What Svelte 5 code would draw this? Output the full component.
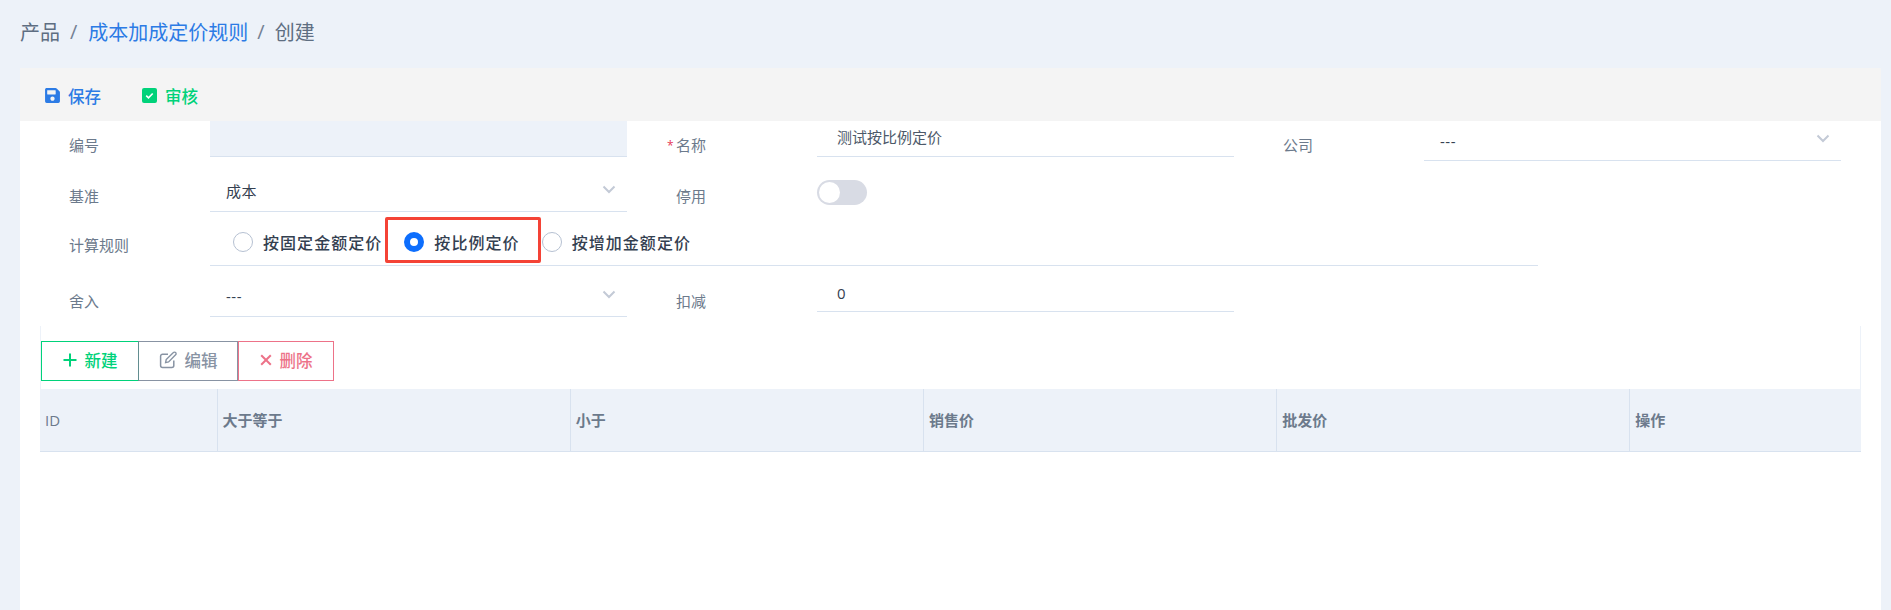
<script lang="ts">
  const columns = ["ID", "大于等于", "小于", "销售价", "批发价", "操作"];
  const rules = ["按固定金额定价", "按比例定价", "按增加金额定价"];

  let rule = $state(rules[1]);
  let disabled = $state(false);
</script>

{#snippet chevron()}
  <svg class="chevron" viewBox="0 0 14 9" width="14" height="9" aria-hidden="true">
    <path d="M1.5 1.5 7 7l5.5-5.5" fill="none" stroke="#c3cad6" stroke-width="2" />
  </svg>
{/snippet}

<div class="page">
  <nav class="crumbs">
    <span>产品</span>
    <span class="sep">/</span>
    <a href="#rules">成本加成定价规则</a>
    <span class="sep">/</span>
    <span>创建</span>
  </nav>

  <main class="card">
    <div class="toolbar">
      <button class="tool save" type="button">
        <svg viewBox="0 0 448 512" width="15" height="17" aria-hidden="true">
          <path fill="currentColor" d="M433.941 129.941l-83.882-83.882A48 48 0 0 0 316.118 32H48C21.49 32 0 53.49 0 80v352c0 26.51 21.49 48 48 48h352c26.51 0 48-21.49 48-48V163.882a48 48 0 0 0-14.059-33.941zM224 416c-35.346 0-64-28.654-64-64 0-35.346 28.654-64 64-64s64 28.654 64 64c0 35.346-28.654 64-64 64zm96-304.52V212c0 6.627-5.373 12-12 12H76c-6.627 0-12-5.373-12-12V108c0-6.627 5.373-12 12-12h228.52c3.183 0 6.235 1.264 8.485 3.515l3.48 3.48A11.996 11.996 0 0 1 320 111.48z" />
        </svg>
        保存
      </button>
      <button class="tool approve" type="button">
        <svg viewBox="0 0 15 15" width="15" height="15" aria-hidden="true">
          <rect width="15" height="15" rx="2" fill="currentColor" />
          <path d="M4.2 7.6 6.5 9.8l4.2-4.3" fill="none" stroke="#fff" stroke-width="1.6" />
        </svg>
        审核
      </button>
    </div>

    <form class="form">
      <label class="label" for="code">编号</label>
      <input id="code" class="field readonly" readonly />

      <label class="label" for="name"><span class="star">*</span>名称</label>
      <input id="name" class="field text name" value="测试按比例定价" />

      <span class="label">公司</span>
      <div class="field select company"><span>---</span>{@render chevron()}</div>

      <span class="label">基准</span>
      <div class="field select"><span>成本</span>{@render chevron()}</div>

      <span class="label">停用</span>
      <button
        class="switch"
        class:on={disabled}
        type="button"
        aria-label="停用"
        onclick={() => (disabled = !disabled)}
      ></button>
      <span></span>
      <span></span>

      <span class="label">计算规则</span>
      <div class="radios">
        {#each rules as item}
          <label class="radio">
            <input type="radio" name="rule" value={item} bind:group={rule} />
            <span>{item}</span>
          </label>
        {/each}
        <div class="highlight"></div>
      </div>

      <span class="label">舍入</span>
      <div class="field select"><span>---</span>{@render chevron()}</div>

      <span class="label">扣减</span>
      <input class="field text deduct" value="0" />
    </form>

    <section class="lines">
      <div class="actions">
        <button class="action add" type="button">
          <svg viewBox="0 0 14 14" width="14" height="14" aria-hidden="true">
            <path d="M7 .5v13M.5 7h13" stroke="currentColor" stroke-width="2" fill="none" />
          </svg>
          新建
        </button>
        <button class="action edit" type="button">
          <svg viewBox="0 0 18 18" width="18" height="18" aria-hidden="true">
            <path d="M9 3.2H3.6a2 2 0 0 0-2 2v9.2a2 2 0 0 0 2 2h9.2a2 2 0 0 0 2-2V9.5" fill="none" stroke="currentColor" stroke-width="1.5" />
            <path d="M6.6 11.6l.6-3 7.2-7a1.5 1.5 0 0 1 2.2 0 1.5 1.5 0 0 1 0 2.2l-7 7.1z" fill="none" stroke="currentColor" stroke-width="1.4" />
          </svg>
          编辑
        </button>
        <button class="action remove" type="button">
          <svg viewBox="0 0 12 12" width="12" height="12" aria-hidden="true">
            <path d="M1.2 1.2l9.6 9.6M10.8 1.2l-9.6 9.6" stroke="currentColor" stroke-width="2" fill="none" />
          </svg>
          删除
        </button>
      </div>

      <table>
        <thead>
          <tr>
            {#each columns as col}
              <th>{col}</th>
            {/each}
          </tr>
        </thead>
      </table>
    </section>
  </main>
</div>

<style>
  :global(body) {
    margin: 0;
    background: #edf2f9;
    font-family: "Open Sans", "Noto Sans CJK SC", sans-serif;
    color: #5e6e82;
  }

  .page {
    height: 610px;
    overflow: hidden;
    padding: 0 10px 0 20px;
    box-sizing: border-box;
  }

  .crumbs {
    height: 68px;
    display: flex;
    align-items: center;
    gap: 9px;
    font-size: 20px;
    color: #5e6e82;
    padding-bottom: 5px;
    box-sizing: border-box;
  }

  .crumbs a {
    color: #2c7be5;
    text-decoration: none;
    margin: 0 -1px 0 1px;
  }

  .sep {
    color: #748194;
    padding: 0 1px;
  }

  .card {
    background: #fff;
    height: 542px;
  }

  .toolbar {
    height: 53px;
    box-sizing: border-box;
    padding: 2px 0 0 25px;
    background: #f4f4f4;
    display: flex;
    align-items: center;
    gap: 41px;
  }

  .tool {
    display: flex;
    align-items: center;
    gap: 8px;
    padding: 0;
    border: none;
    background: none;
    font: inherit;
    font-size: 16.5px;
    font-weight: 500;
  }

  .save {
    color: #2c7be5;
  }

  .approve {
    color: #00d27a;
  }

  .form {
    display: grid;
    grid-template-columns: repeat(3, 190px 417px);
    grid-template-rows: 51px 49px 56px 49px;
  }

  .label {
    font-size: 15px;
    line-height: 20px;
    color: #6c7a8c;
    padding: 14px 0 0 49px;
    position: relative;
  }

  .star {
    position: absolute;
    left: 40px;
    top: 15px;
    color: #e63757;
    font-size: 12px;
  }

  .field {
    box-sizing: border-box;
    width: 100%;
    border: none;
    border-bottom: 1px solid #d8e2ef;
    background: none;
    font: inherit;
    font-size: 15px;
    color: #344050;
    outline: none;
    align-self: start;
  }

  .readonly {
    height: 36px;
    background: #edf2f9;
  }

  .text {
    padding: 0 20px 2px;
  }

  .name {
    height: 36px;
    padding-bottom: 4px;
    color: #4d5969;
  }

  .deduct {
    height: 35px;
  }

  .select {
    height: 40px;
    display: flex;
    align-items: center;
    justify-content: space-between;
    padding: 0 11px 2px 16px;
    letter-spacing: 0.5px;
  }

  .company {
    padding-bottom: 0;
  }

  .company .chevron {
    margin-bottom: 4px;
  }

  .chevron {
    margin-bottom: 2px;
  }

  .switch {
    width: 50px;
    height: 25px;
    margin-top: 8px;
    padding: 0;
    border: none;
    border-radius: 13px;
    background: #d8dbe4;
    position: relative;
  }

  .switch::after {
    content: "";
    position: absolute;
    left: 2px;
    top: 2px;
    width: 21px;
    height: 21px;
    border-radius: 50%;
    background: #fff;
  }

  .switch.on {
    background: #2c7be5;
  }

  .switch.on::after {
    left: 27px;
  }

  .radios {
    grid-column: span 5;
    width: 1328px;
    height: 45px;
    box-sizing: border-box;
    border-bottom: 1px solid #d8e2ef;
    display: flex;
    align-items: center;
    gap: 22px;
    padding: 0 0 3px 23px;
    position: relative;
  }

  .radio {
    display: flex;
    align-items: center;
    gap: 10px;
    font-size: 16px;
    font-weight: 500;
    letter-spacing: 1.05px;
    color: #344050;
  }

  .radio span {
    padding-top: 1px;
  }

  .radio input {
    appearance: none;
    margin: 0;
    width: 20px;
    height: 20px;
    border-radius: 50%;
    border: 1px solid #b6c1d2;
    background: #fff;
  }

  .radio input:checked {
    border: 6px solid #0d6efd;
  }

  /* red annotation box around the selected option */
  .highlight {
    position: absolute;
    left: 175px;
    top: -4px;
    width: 156px;
    height: 46px;
    box-sizing: border-box;
    border: 3px solid #f44336;
    border-radius: 2px;
    pointer-events: none;
  }

  .lines {
    margin: 0 20px;
  }

  .actions {
    display: flex;
    box-sizing: border-box;
    height: 63px;
    padding: 15px 0 8px;
    border-left: 1px solid #edf2f9;
    border-right: 1px solid #edf2f9;
  }

  .action {
    box-sizing: border-box;
    display: flex;
    align-items: center;
    justify-content: center;
    gap: 8px;
    height: 40px;
    padding: 0 0 2px;
    background: #fff;
    border: 1px solid currentColor;
    font: inherit;
    font-size: 16.5px;
    font-weight: 500;
  }

  .add {
    width: 98px;
    color: #00d27a;
  }

  .edit {
    width: 100px;
    margin-left: -1px;
    color: #748194;
    background: none;
    opacity: 0.85;
  }

  .remove {
    width: 96px;
    color: #e63757;
    background: none;
    opacity: 0.7;
  }

  table {
    width: 100%;
    table-layout: fixed;
    border-collapse: collapse;
    background: #edf2f9;
  }

  th {
    height: 62px;
    box-sizing: border-box;
    padding: 0 5px;
    text-align: left;
    font-size: 15px;
    font-weight: 700;
    color: #6c7a8c;
    border-left: 1px solid #d8e2ef;
    border-bottom: 1px solid #d8e2ef;
    width: 353px;
  }

  th:first-child {
    width: 177px;
    border-left: none;
    font-weight: 400;
  }

  th:last-child {
    width: 231px;
  }
</style>
